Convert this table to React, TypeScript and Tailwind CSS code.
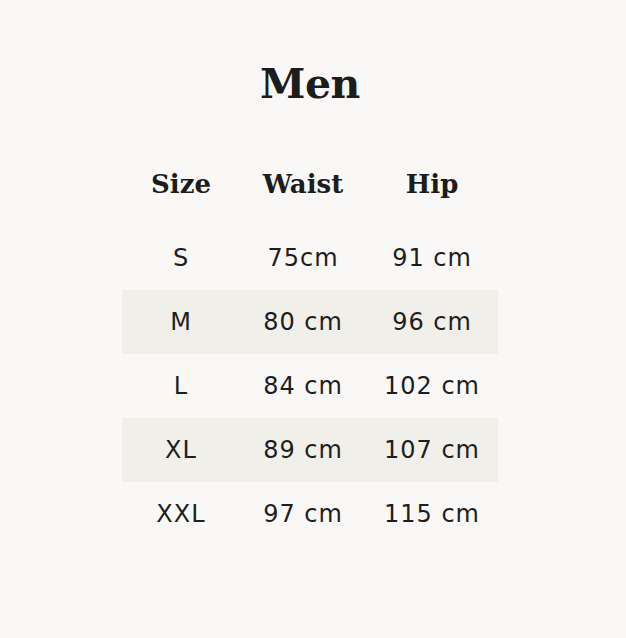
const rows = [
  { size: "S", waist: "75cm", hip: "91 cm" },
  { size: "M", waist: "80 cm", hip: "96 cm" },
  { size: "L", waist: "84 cm", hip: "102 cm" },
  { size: "XL", waist: "89 cm", hip: "107 cm" },
  { size: "XXL", waist: "97 cm", hip: "115 cm" },
];

const serif = "font-['DejaVu_Serif',serif] font-bold text-[#1c1c1c]";
const sans = "font-['DejaVu_Sans',sans-serif] text-[#1e1e1e] text-[24px] tracking-[1px]";

export default function App() {
  return (
    <div className="min-h-[638px] w-full bg-[#f9f8f6]">
      <div className="flex w-[620px] flex-col items-center pt-[56px]">
        <h1 className={`${serif} text-[41px] leading-[56px] tracking-[-0.5px]`}>Men</h1>

        <div className="mt-[40px] w-[376px]">
          {/* header */}
          <div className="grid h-[64px] grid-cols-[118px_126px_132px] items-center text-center">
            <div className={`${serif} text-[26px]`}>Size</div>
            <div className={`${serif} text-[26px]`}>Waist</div>
            <div className={`${serif} text-[26px]`}>Hip</div>
          </div>

          <div className="mt-[10px]">
            {rows.map((r, i) => (
              <div
                key={r.size}
                className={`grid h-[64px] grid-cols-[118px_126px_132px] items-center text-center ${
                  i % 2 === 1 ? "bg-[#f1efe9]" : ""
                }`}
              >
                <div className={sans}>{r.size}</div>
                <div className={sans}>{r.waist}</div>
                <div className={sans}>{r.hip}</div>
              </div>
            ))}
          </div>
        </div>
      </div>
    </div>
  );
}
